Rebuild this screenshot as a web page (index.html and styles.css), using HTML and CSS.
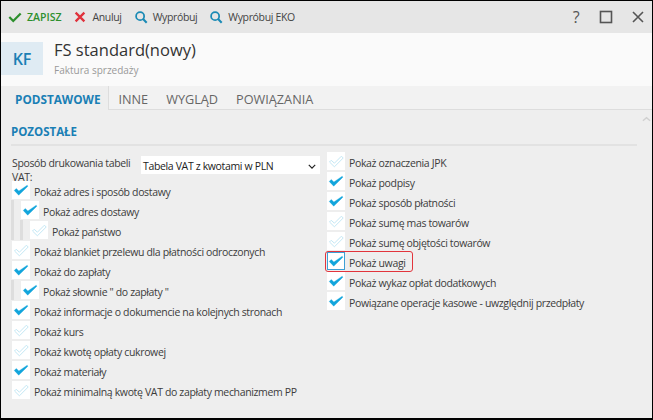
FILE: index.html
```html
<!DOCTYPE html>
<html lang="pl">
<head>
<meta charset="utf-8">
<title>FS standard(nowy)</title>
<link rel="stylesheet" href="styles.css">
</head>
<body>
<svg class="defs" width="0" height="0" aria-hidden="true">
  <symbol id="on" viewBox="0 0 18 18"><path d="M2.2 9.4 L4.3 7.5 L6.9 9.9 L15.2 4.2 L15.9 5.2 L6.7 14.2 Z" fill="#12a5dc" stroke="#12a5dc" stroke-width=".3" stroke-linejoin="round"/></symbol>
  <symbol id="off" viewBox="0 0 18 18"><path d="M2.5 10 L4.2 8.3 L7.4 11.2 L14.4 4.2 L16.2 6 L7.4 14.8 Z" fill="none" stroke="#c4e8f5" stroke-width="1" stroke-linejoin="round"/></symbol>
</svg>
<div class="window">
  <div class="toolbar">
    <span class="tool save"><svg class="ticon" viewBox="0 0 16 16"><path d="M1.5 8 L6 12.5 L14.5 4" fill="none" stroke="#2d8f2d" stroke-width="2.6"/></svg>ZAPISZ</span>
    <span class="tool"><svg class="ticon" viewBox="0 0 16 16"><path d="M3 3 L13 13 M13 3 L3 13" fill="none" stroke="#e0323c" stroke-width="2.6"/></svg>Anuluj</span>
    <span class="tool"><svg class="ticon" viewBox="0 0 16 16"><circle cx="7" cy="7" r="4.6" fill="none" stroke="#1a8ab5" stroke-width="2"/><path d="M10.4 10.4 L14.5 14.5" stroke="#1a8ab5" stroke-width="2.4"/></svg>Wypróbuj</span>
    <span class="tool"><svg class="ticon" viewBox="0 0 16 16"><circle cx="7" cy="7" r="4.6" fill="none" stroke="#1a8ab5" stroke-width="2"/><path d="M10.4 10.4 L14.5 14.5" stroke="#1a8ab5" stroke-width="2.4"/></svg>Wypróbuj EKO</span>
    <span class="winbtns">
      <span class="help">?</span>
      <svg class="wicon" viewBox="0 0 14 14"><rect x="1.5" y="1.5" width="11" height="11" fill="none" stroke="#555" stroke-width="1.6"/></svg>
      <svg class="wicon" viewBox="0 0 14 14"><path d="M2 2 L12 12 M12 2 L2 12" fill="none" stroke="#555" stroke-width="1.6"/></svg>
    </span>
  </div>
  <div class="header">
    <div class="badge">KF</div>
    <div class="titles">
      <div class="title">FS standard(nowy)</div>
      <div class="subtitle">Faktura sprzedaży</div>
    </div>
  </div>
  <div class="tabs">
    <span class="tab active">PODSTAWOWE</span>
    <span class="tab">INNE</span>
    <span class="tab">WYGLĄD</span>
    <span class="tab">POWIĄZANIA</span>
  </div>
  <div class="content">
    <div class="scrollbar"><svg class="chev" viewBox="0 0 10 6"><path d="M1 5 L5 1.5 L9 5" fill="none" stroke="#d0d0d0" stroke-width="1.5"/></svg></div>
    <h2 class="section">POZOSTAŁE</h2>
    <div class="columns">
      <div class="col left">
        <div class="selectrow">
          <label class="selectlabel">Sposób drukowania tabeli VAT:</label>
          <div class="select"><span>Tabela VAT z kwotami w PLN</span><svg class="selchev" viewBox="0 0 10 6"><path d="M1 1 L5 5 L9 1" fill="none" stroke="#222" stroke-width="1.5"/></svg></div>
        </div>
        <div class="row"><span class="box"><svg><use href="#on"/></svg></span>Pokaż adres i sposób dostawy</div>
        <div class="row l1"><span class="box"><svg><use href="#on"/></svg></span>Pokaż adres dostawy</div>
        <div class="row l1 l2"><span class="box"><svg><use href="#off"/></svg></span>Pokaż państwo</div>
        <div class="row"><span class="box"><svg><use href="#off"/></svg></span>Pokaż blankiet przelewu dla płatności odroczonych</div>
        <div class="row"><span class="box"><svg><use href="#on"/></svg></span>Pokaż do zapłaty</div>
        <div class="row l1"><span class="box"><svg><use href="#on"/></svg></span>Pokaż słownie " do zapłaty "</div>
        <div class="row"><span class="box"><svg><use href="#on"/></svg></span>Pokaż informacje o dokumencie na kolejnych stronach</div>
        <div class="row"><span class="box"><svg><use href="#off"/></svg></span>Pokaż kurs</div>
        <div class="row"><span class="box"><svg><use href="#off"/></svg></span>Pokaż kwotę opłaty cukrowej</div>
        <div class="row"><span class="box"><svg><use href="#on"/></svg></span>Pokaż materiały</div>
        <div class="row"><span class="box"><svg><use href="#off"/></svg></span>Pokaż minimalną kwotę VAT do zapłaty mechanizmem PP</div>
      </div>
      <div class="col right">
        <div class="row"><span class="box"><svg><use href="#off"/></svg></span>Pokaż oznaczenia JPK</div>
        <div class="row"><span class="box"><svg><use href="#on"/></svg></span>Pokaż podpisy</div>
        <div class="row"><span class="box"><svg><use href="#on"/></svg></span>Pokaż sposób płatności</div>
        <div class="row"><span class="box"><svg><use href="#off"/></svg></span>Pokaż sumę mas towarów</div>
        <div class="row"><span class="box"><svg><use href="#off"/></svg></span>Pokaż sumę objętości towarów</div>
        <div class="row marked"><span class="box focus"><svg><use href="#on"/></svg></span>Pokaż uwagi<span class="redmark"></span></div>
        <div class="row"><span class="box"><svg><use href="#on"/></svg></span>Pokaż wykaz opłat dodatkowych</div>
        <div class="row"><span class="box"><svg><use href="#on"/></svg></span>Powiązane operacje kasowe - uwzględnij przedpłaty</div>
      </div>
    </div>
  </div>
</div>
</body>
</html>
```
FILE: styles.css
```css
* { box-sizing: border-box; }
html, body { margin: 0; padding: 0; }
body { width: 653px; height: 420px; overflow: hidden; font-family: "Open Sans", "Liberation Sans", sans-serif; font-size: 10.5px; letter-spacing: -0.35px; color: #3c3c3c; background: #000; }
.defs { position: absolute; }
.window { width: 651px; height: 417px; margin: 1px 0 0 1px; display: flex; flex-direction: column; background: #eee; overflow: hidden; }
.toolbar { height: 32px; flex: none; background: #e6e6e6; display: flex; align-items: center; padding-left: 7px; color: #444; }
.tool { display: flex; align-items: center; margin-right: 12px; }
.ticon { width: 14px; height: 14px; margin-right: 5px; }
.save { color: #2d8f2d; font-weight: 600; letter-spacing: 0; }
.winbtns { margin-left: auto; display: flex; align-items: center; gap: 15px; padding-right: 7px; }
.help { font-size: 16px; line-height: 16px; color: #555; width: 14px; text-align: center; margin-right: 1px; }
.wicon { width: 14px; height: 14px; }
.wicon:last-child { margin-left: 3px; }
.header { height: 53px; flex: none; background: #fafafa; display: flex; align-items: center; }
.badge { width: 42px; height: 33px; margin-top: -2px; background: #dfebf3; color: #1a7fb5; font-size: 16px; font-weight: 600; letter-spacing: 0; display: flex; align-items: center; justify-content: center; }
.titles { margin-left: 11px; margin-top: -4px; }
.title { font-size: 16.5px; line-height: 22px; color: #333; letter-spacing: 0; }
.subtitle { font-size: 10px; line-height: 14px; color: #999; margin-top: 2px; letter-spacing: 0; }
.tabs { height: 24px; flex: none; background: #f2f2f2; border-bottom: 1px solid #ddd; display: flex; font-size: 12.7px; color: #666; letter-spacing: 0; }
.tab { padding: 0 9px; line-height: 26px; }
.tab.active { background: #eee; color: #1a7fb5; font-weight: 700; font-size: 11.75px; height: 24px; padding: 0 8px 0 14px; border-right: 1px solid #ddd; }
.content { position: relative; flex: 1; padding: 14px 15px 0 10px; }
.scrollbar { position: absolute; right: 0; top: 0; bottom: 0; width: 11px; }
.chev { position: absolute; left: 1px; top: 6px; width: 9px; height: 6px; }
.section { margin: 0; font-size: 11.5px; line-height: 15px; font-weight: 700; color: #1a7fb5; letter-spacing: 0; padding-bottom: 5px; border-bottom: 2px solid #e2e2e2; }
.columns { display: flex; margin-top: 5px; margin-left: 1px; }
.col { display: flex; flex-direction: column; }
.left { width: 315px; }
.selectrow { display: flex; height: 29px; padding-top: 5px; }
.selectlabel { width: 129px; line-height: 14px; }
.select { width: 179px; height: 18px; background: #fff; display: flex; align-items: center; justify-content: space-between; padding: 2px 4px 0 2px; color: #222; }
.selchev { width: 8px; height: 5px; }
.row { display: flex; align-items: flex-end; height: 20px; padding-bottom: 1px; line-height: 14px; position: relative; white-space: nowrap; }
.box { width: 18px; height: 18px; background: #fff; margin-right: 4px; flex: none; display: block; }
.box svg { width: 18px; height: 18px; display: block; }
.l1 { padding-left: 9px; }
.l1::before { content: ""; position: absolute; left: -1px; top: 0; bottom: 0; width: 3px; background: #ddd; }
.l2 { padding-left: 18px; }
.l2::after { content: ""; position: absolute; left: 8px; top: 0; bottom: 0; width: 3px; background: #ddd; }
.focus { box-shadow: inset 0 0 0 1px #3da0d6; }
.redmark { position: absolute; left: -2px; top: 0; width: 88px; height: 21px; border: 1.5px solid #e2343c; border-radius: 3px; }
```
